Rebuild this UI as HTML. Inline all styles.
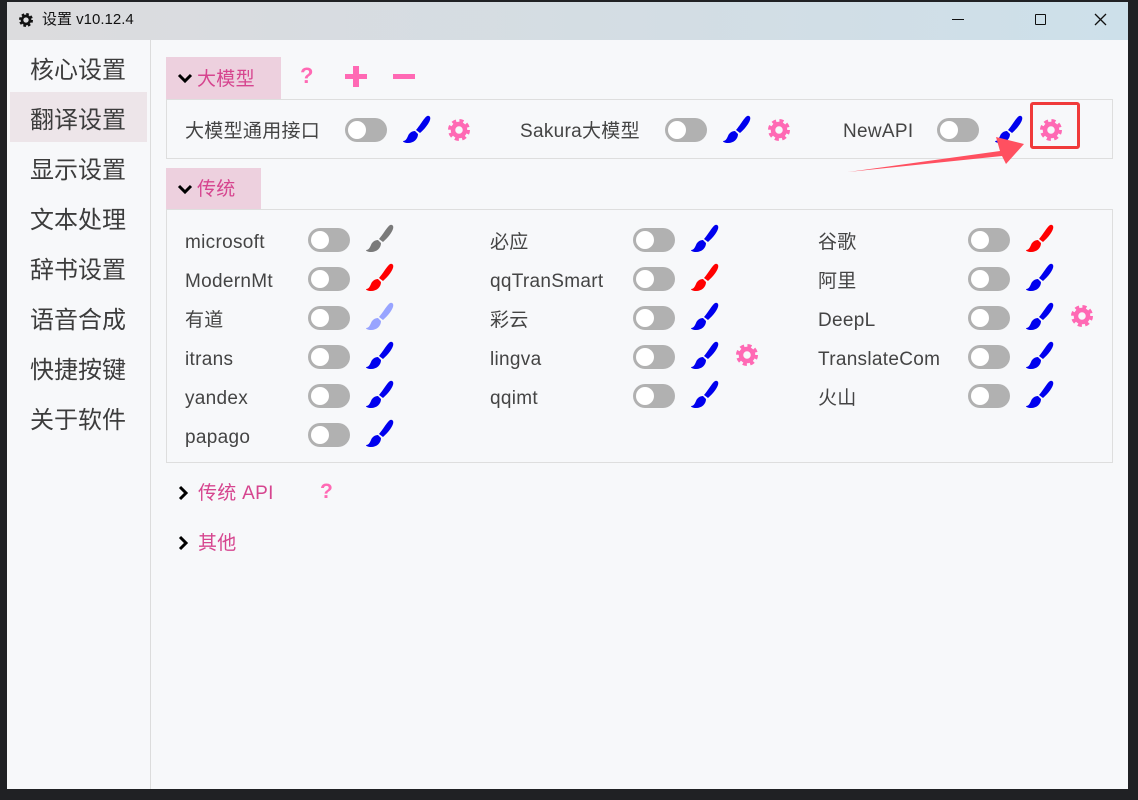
<!DOCTYPE html>
<html><head><meta charset="utf-8"><style>
*{margin:0;padding:0;box-sizing:border-box}
body{width:1138px;height:800px;background:#202124;position:relative;overflow:hidden;font-family:"Liberation Sans","Noto Sans CJK SC",sans-serif;color:#444}
.abs{position:absolute}
#win{left:7px;top:2px;width:1121px;height:787px;background:#f7f8fa;}
#title{left:7px;top:2px;width:1121px;height:38px;background:linear-gradient(90deg,#dcdcde,#d3dde4 60%,#cde0ea);}
.t{position:absolute;white-space:nowrap;line-height:1}
.side{font-size:24px;color:#3c3c3c;left:30px}
.txt{font-size:19px;color:#444;letter-spacing:0.3px}
.pink{color:#d6458f}
.tog{position:absolute;width:42px;height:24px;border-radius:12px;background:#b1b1b1}
.tog::after{content:"";position:absolute;left:3px;top:3px;width:18px;height:18px;border-radius:50%;background:#fff}
svg{position:absolute}
</style></head><body>
<div id="win" class="abs"></div>
<div id="title" class="abs"></div>
<svg style="left:18px;top:12px" width="16" height="16" viewBox="0 0 24 24"><circle cx="12" cy="12" r="8" fill="none" stroke="#111" stroke-width="5" stroke-dasharray="3.5 2.8"/><circle cx="12" cy="12" r="6" fill="none" stroke="#111" stroke-width="4"/></svg>
<div class="t" style="left:42px;top:12px;font-size:15px;color:#111">设置 v10.12.4</div>
<div class="abs" style="left:952px;top:19px;width:12px;height:1px;background:#111"></div>
<div class="abs" style="left:1035px;top:14px;width:11px;height:11px;border:1.3px solid #111;border-radius:1px"></div>
<svg style="left:1094px;top:13px" width="13" height="13"><path d="M1 1L12 12M12 1L1 12" stroke="#111" stroke-width="1.3"/></svg>
<div class="abs" style="left:150px;top:40px;width:1px;height:749px;background:#dcdcdc"></div>
<div class="abs" style="left:10px;top:92px;width:137px;height:50px;background:#ede5e9"></div>
<div class="t side" style="top:59px">核心设置</div>
<div class="t side" style="top:109px">翻译设置</div>
<div class="t side" style="top:159px">显示设置</div>
<div class="t side" style="top:209px">文本处理</div>
<div class="t side" style="top:259px">辞书设置</div>
<div class="t side" style="top:309px">语音合成</div>
<div class="t side" style="top:359px">快捷按键</div>
<div class="t side" style="top:409px">关于软件</div>

<div class="abs" style="left:166px;top:57px;width:115px;height:42px;background:#edd0de"></div>
<svg style="left:177px;top:73px" width="16" height="12"><path d="M2 2L8 8L14 2" fill="none" stroke="#000" stroke-width="3"/></svg>
<div class="t txt pink" style="left:197px;top:70px">大模型</div>
<div class="t" style="left:300px;top:65px;font-size:22px;font-weight:bold;color:#ff69b4">?</div>
<div class="abs" style="left:345px;top:74px;width:22px;height:5px;background:#ff69b4"></div>
<div class="abs" style="left:353px;top:66px;width:6px;height:21px;background:#ff69b4"></div>
<div class="abs" style="left:393px;top:74px;width:22px;height:5px;background:#ff69b4"></div>
<div class="abs" style="left:166px;top:99px;width:947px;height:60px;border:1px solid #dedede"></div>

<div class="abs" style="left:166px;top:168px;width:95px;height:41px;background:#edd0de"></div>
<svg style="left:177px;top:184px" width="16" height="12"><path d="M2 2L8 8L14 2" fill="none" stroke="#000" stroke-width="3"/></svg>
<div class="t txt pink" style="left:197px;top:180px">传统</div>
<div class="abs" style="left:166px;top:209px;width:947px;height:254px;border:1px solid #dedede"></div>

<svg style="left:178px;top:485px" width="12" height="16"><path d="M2 2L8 8L2 14" fill="none" stroke="#000" stroke-width="3"/></svg>
<div class="t txt pink" style="left:198px;top:484px">传统 API</div>
<div class="t" style="left:320px;top:481px;font-size:21px;font-weight:bold;color:#ff69b4">?</div>
<svg style="left:178px;top:535px" width="12" height="16"><path d="M2 2L8 8L2 14" fill="none" stroke="#000" stroke-width="3"/></svg>
<div class="t txt pink" style="left:198px;top:534px">其他</div>

<div id="rows"></div>
<script>
const B=(x,y,c)=>`<svg style="left:${x}px;top:${y}px" width="30" height="30" viewBox="0 0 30 30"><path d="M27 1C31 3 25 12 18 18L14 15C20 8 24 -1 27 1Z" fill="${c}"/><path d="M13 16L16 19C16 24 12 28 6 28C3 28 1 27 1 26C4 26 5 23 6 21C7 18 10 16 13 16Z" fill="${c}"/></svg>`;
const G=(x,y)=>`<svg style="left:${x}px;top:${y}px" width="24" height="24" viewBox="0 0 24 24"><circle cx="12" cy="12" r="8.5" fill="none" stroke="#ff69b4" stroke-width="5" stroke-dasharray="3.7 3"/><circle cx="12" cy="12" r="6" fill="none" stroke="#ff69b4" stroke-width="4.5"/></svg>`;
const T=(x,y)=>`<div class="tog" style="left:${x}px;top:${y}px"></div>`;
const L=(x,y,s)=>`<div class="t txt" style="left:${x}px;top:${y}px">${s}</div>`;
let h='';
h+=L(185,122,'大模型通用接口')+T(345,118)+B(402,115,'#0000ee')+G(447,118);
h+=L(520,122,'Sakura大模型')+T(665,118)+B(722,115,'#0000ee')+G(767,118);
h+=L(843,122,'NewAPI')+T(937,118)+B(994,115,'#0000ee')+G(1039,118);
const cols=[[185,308,365],[490,633,690],[818,968,1025]];
const data=[
[['microsoft','#7a7a7a'],['必应','#0000ee'],['谷歌','#ff0000']],
[['ModernMt','#ff0000'],['qqTranSmart','#ff0000'],['阿里','#0000ee']],
[['有道','#98a4ff'],['彩云','#0000ee'],['DeepL','#0000ee',1]],
[['itrans','#0000ee'],['lingva','#0000ee',1],['TranslateCom','#0000ee']],
[['yandex','#0000ee'],['qqimt','#0000ee'],['火山','#0000ee']],
[['papago','#0000ee']]];
data.forEach((r,i)=>{const y=231+i*39;r.forEach((c,j)=>{const [a,b,d]=cols[j];h+=L(a,y+2,c[0])+T(b,y-3)+B(d,y-7,c[1]);if(c[2])h+=G(d+45,y-5);});});
document.getElementById('rows').innerHTML=h;
</script>
<div class="abs" style="left:1030px;top:102px;width:50px;height:47px;border:3px solid #f03a3a;border-radius:3px"></div>
<svg style="left:840px;top:135px" width="190" height="45"><path d="M8 37L160 16L156 2L184 9L166 29L162 21Z" fill="#ff5060"/></svg>
</body></html>
